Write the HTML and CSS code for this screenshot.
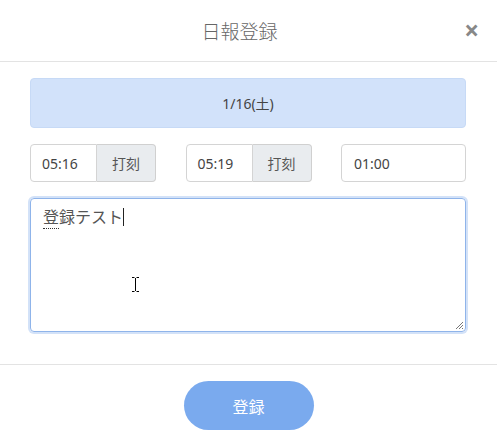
FILE: index.html
```html
<!DOCTYPE html>
<html lang="ja">
<head>
    <meta charset="UTF-8">
    <meta name="viewport" content="width=device-width, initial-scale=1.0">
    <title>日報登録</title>
    <link rel="stylesheet" href="styles.css">
</head>
<body>
    <div class="modal">
        <div class="modal-header">
            <h2 class="modal-title">日報登録</h2>
            <span class="close">&times;</span>
        </div>

        <div class="modal-body">
            <div class="date-bar">1/16(土)</div>

            <div class="time-row">
                <div class="time-group">
                    <div class="time-input">05:16</div>
                    <div class="stamp-btn">打刻</div>
                </div>
                <div class="time-group">
                    <div class="time-input">05:19</div>
                    <div class="stamp-btn">打刻</div>
                </div>
                <div class="time-group">
                    <div class="time-input wide">01:00</div>
                </div>
            </div>

            <div class="memo">
                <span class="ime">登</span>録テスト<span class="caret"></span>
                <svg class="ibeam" width="9" height="17" viewBox="0 0 9 17">
                    <path d="M1 1.5h2.5M5.5 1.5H8M4.5 2v13M1 15.5h2.5M5.5 15.5H8" stroke="#000" stroke-width="1" fill="none"/>
                </svg>
                <svg class="grip" width="10" height="10" viewBox="0 0 10 10">
                    <path d="M9 2L2 9M9 5L5 9M9 8L8 9" stroke="#777" stroke-width="1" fill="none"/>
                </svg>
            </div>
        </div>

        <div class="modal-footer">
            <button class="submit-btn">登録</button>
        </div>
    </div>
</body>
</html>
```

FILE: styles.css
```css
body {
    margin: 0;
    font-family: "Noto Sans", "Noto Sans CJK JP", sans-serif;
    background: #fff;
    color: #333;
}
.modal {
    width: 497px;
    height: 443px;
    background: #fff;
}
.modal-header {
    position: relative;
    height: 61px;
    border-bottom: 1px solid #e3e3e3;
    display: flex;
    justify-content: center;
    align-items: center;
}
.modal-title {
    margin: 0 18px 0 0;
    font-size: 19px;
    font-weight: 300;
    color: #666;
}
.close {
    position: absolute;
    right: 18px;
    top: 16px;
    font-size: 26px;
    line-height: 28px;
    font-weight: bold;
    color: #888;
}
.modal-body {
    padding: 16px 31px 32px 30px;
}
.date-bar {
    height: 48px;
    background: #d2e2fa;
    border: 1px solid #c7daf6;
    border-radius: 4px;
    display: flex;
    justify-content: center;
    align-items: center;
    font-size: 14px;
    color: #444;
}
.time-row {
    margin-top: 16px;
    display: grid;
    grid-template-columns: 126px 126px 125px;
    justify-content: space-between;
}
.time-group {
    display: flex;
    height: 38px;
}
.time-input {
    box-sizing: border-box;
    width: 67px;
    border: 1px solid #d4d4d4;
    border-radius: 4px 0 0 4px;
    padding-left: 11px;
    display: flex;
    align-items: center;
    font-size: 14px;
    color: #444;
    background: #fff;
}
.time-input.wide {
    width: 125px;
    border-radius: 4px;
    padding-left: 12px;
}
.stamp-btn {
    box-sizing: border-box;
    width: 59px;
    background: #e9ecef;
    border: 1px solid #d0d0d0;
    border-left: none;
    border-radius: 0 4px 4px 0;
    display: flex;
    justify-content: center;
    align-items: center;
    font-size: 14px;
    color: #555;
}
.memo {
    position: relative;
    box-sizing: border-box;
    margin-top: 16px;
    height: 134px;
    border: 1px solid #8fb4ea;
    border-radius: 4px;
    box-shadow: 0 0 0 2px #d3e2f8;
    padding: 7px 12px;
    font-size: 16px;
    line-height: 22px;
    color: #555;
}
.ime {
    border-bottom: 1px dotted #333;
}
.caret {
    display: inline-block;
    width: 1px;
    height: 18px;
    background: #222;
    vertical-align: -3px;
}
.ibeam {
    position: absolute;
    left: 100px;
    top: 77px;
}
.grip {
    position: absolute;
    right: 1px;
    bottom: 1px;
}
.modal-footer {
    border-top: 1px solid #e3e3e3;
    display: flex;
    justify-content: center;
    padding-top: 16px;
}
.submit-btn {
    width: 130px;
    height: 49px;
    border: none;
    border-radius: 25px;
    background: #7aaaee;
    color: #fff;
    font-family: inherit;
    font-size: 16px;
}
```
